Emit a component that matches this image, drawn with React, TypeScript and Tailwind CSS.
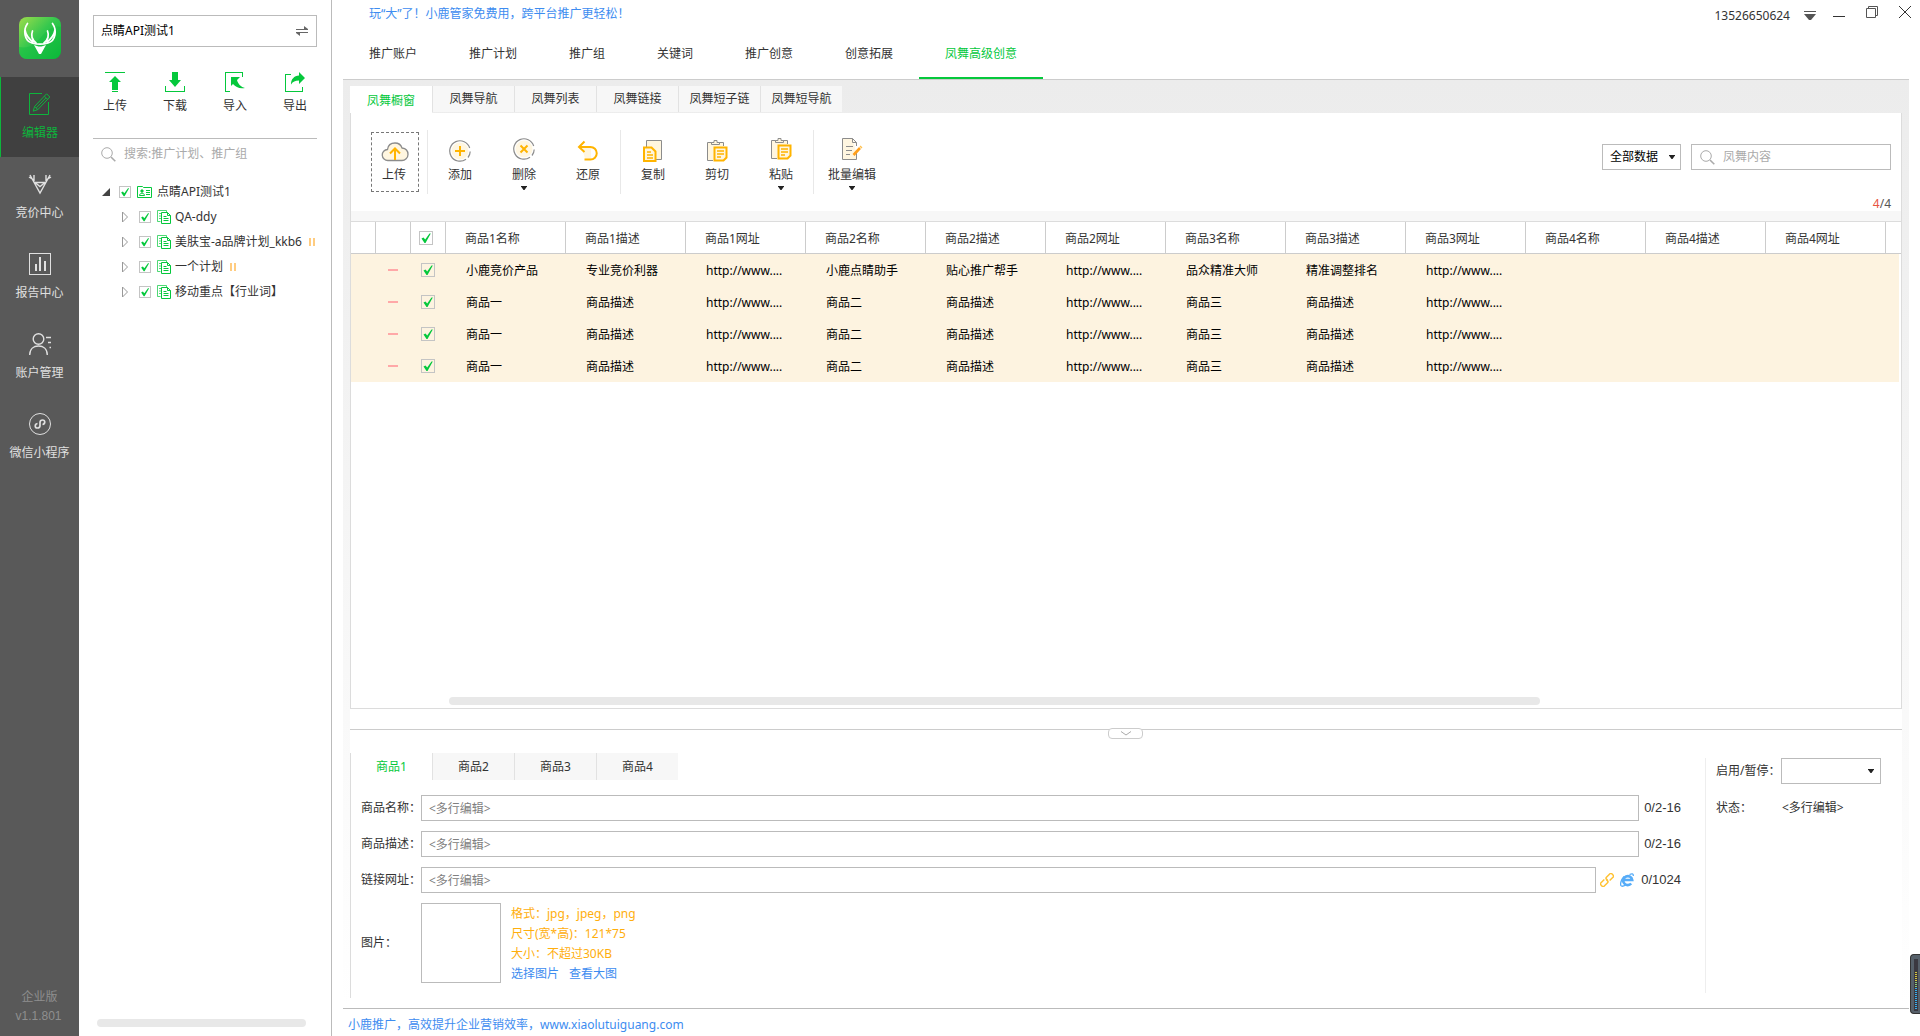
import { ReactNode } from "react";

const navTabs = ["推广账户", "推广计划", "推广组", "关键词", "推广创意", "创意拓展", "凤舞高级创意"];
const subTabs = ["凤舞橱窗", "凤舞导航", "凤舞列表", "凤舞链接", "凤舞短子链", "凤舞短导航"];
const goodsTabs = ["商品1", "商品2", "商品3", "商品4"];

const columns = [1, 2, 3, 4].flatMap((n) => [`商品${n}名称`, `商品${n}描述`, `商品${n}网址`]);

const url = "http://www....";
const plainRow = ["商品一", "商品描述", url, "商品二", "商品描述", url, "商品三", "商品描述", url, "", "", ""];
const rows = [
  ["小鹿竞价产品", "专业竞价利器", url, "小鹿点睛助手", "贴心推广帮手", url, "品众精准大师", "精准调整排名", url, "", "", ""],
  plainRow,
  plainRow,
  plainRow,
];

const plans = [
  { name: "QA-ddy", paused: false },
  { name: "美肤宝-a品牌计划_kkb6", paused: true },
  { name: "一个计划", paused: true },
  { name: "移动重点【行业词】", paused: false },
];

const railItems = [
  {
    label: "编辑器",
    icon: (
      <svg className="w-6 h-6" viewBox="0 0 24 24" fill="none" stroke="currentColor" strokeWidth={1}>
        <path d="M14 1.5H1.5v21h19V10" />
        <path d="M18.6 1.8l3.2 3.2-12 12.6-4.6 1.6 1.4-4.8zM16.4 4.2l3.2 3.2M6.6 14.4l3.2 3.2M8.4 15.8l9.4-9.8" />
      </svg>
    ),
  },
  {
    label: "竞价中心",
    icon: (
      <svg className="w-6 h-6" viewBox="0 0 24 24" fill="none" stroke="currentColor" strokeWidth={1.4}>
        <path d="M2 3l10 18L22 3M6 10.5h12M1 5l5 3V3M23 5l-5 3V3M7 10.5l5 4 5-4" />
      </svg>
    ),
  },
  {
    label: "报告中心",
    icon: (
      <svg className="w-6 h-6" viewBox="0 0 24 24" fill="none" stroke="currentColor">
        <rect x="1.5" y="1.5" width="21" height="21" />
        <path strokeWidth={2} d="M8 19v-7M12 19V5M17 19V9" />
      </svg>
    ),
  },
  {
    label: "账户管理",
    icon: (
      <svg className="w-6 h-6" viewBox="0 0 24 24" fill="none" stroke="currentColor" strokeWidth={1.4}>
        <circle cx="10.5" cy="7" r="5.3" />
        <path d="M1.7 23c0-6 4-9 8.800-9s8.800 3 8.800 9M18 5.500h5M20 10.500h3M21.500 15.500H23" />
      </svg>
    ),
  },
  {
    label: "微信小程序",
    icon: (
      <svg className="w-6 h-6" viewBox="0 0 24 24" fill="none" stroke="currentColor">
        <circle cx="12" cy="12" r="10.5" />
        <path strokeWidth={1.7} d="M9.5 11.5c-3 .5-3 4.500 0 4.500 1.500 0 2.500-1 2.500-2.500v-3C12 9 13 8 14.500 8c3 0 3 4 0 4.500" />
      </svg>
    ),
  },
];

const sideActions = [
  {
    label: "上传",
    icon: <path d="M0 0h20v1H0zM10 4l6 6h-3v8H7v-8H4zM7 19h6v1H7z" />,
  },
  {
    label: "下载",
    icon: <path d="M7 0h6v8h3l-6 7-6-7h3zM0 14h1v5h18v-5h1v6H0z" />,
  },
  {
    label: "导入",
    icon: <path d="M0 0h18v5h-1V1H1v18h4v1H0zM6 5h9l-3 3c1 4 4 7 8 8-6 1-9-1-12-4l-2 2z" />,
  },
  {
    label: "导出",
    icon: <path d="M0 2h6v1H1v16h16v-4h1v5H0zM14 0l6 6-6 6V8.5c-4 0-6 1-8 4C6 7 9 4 14 3.5z" />,
  },
];

const orange = "#ffb400";
const cream = "#fff6e0";
const line = "#8c8c8c";

const clipboard = (
  <g stroke={line} fill={cream}>
    <path d="M7 20.500H1.500v-18h16V6" />
    <path d="M5.500 4.500v-2h2.500V.5h3v2h2.500v2z" />
    <path d="M8.500 7.500h12v10l-3 3h-9z" stroke={orange} strokeWidth={2} />
    <path d="M11 11h7M11 14h7M11 17h4" stroke={orange} strokeWidth={1.3} />
  </g>
);

const tools = [
  {
    label: "添加",
    icon: (
      <g fill="none">
        <circle cx="11" cy="11" r="8.5" fill={cream} />
        <path d="M20.700 8A10.200 10.200 0 1 0 17 19.200M19 17.500a10 10 0 0 0 2.200-6" stroke={line} strokeWidth={1.2} />
        <path d="M11 6v10M6 11h10" stroke={orange} strokeWidth={2} />
      </g>
    ),
  },
  {
    label: "删除",
    arrow: true,
    icon: (
      <g fill="none">
        <circle cx="11" cy="11" r="8.5" fill={cream} />
        <path d="M20.700 8A10.200 10.200 0 1 0 17 19.200M19 17.500a10 10 0 0 0 2.200-6" stroke={line} strokeWidth={1.2} />
        <path d="M7.500 7.500l7 7M14.500 7.500l-7 7" stroke={orange} strokeWidth={2} />
      </g>
    ),
  },
  {
    label: "还原",
    icon: (
      <g fill="none">
        <path d="M5 7h9v12H8z" fill={cream} />
        <path d="M7.500 1.500L2 7l5.500 5M2 7h11.500a6 6 0 0 1 0 12.500H7.500" stroke={orange} strokeWidth={2} />
      </g>
    ),
  },
  {
    label: "复制",
    icon: (
      <g>
        <path d="M4.500 14V.5h15v19H14" fill={cream} stroke={line} />
        <path d="M2 7.500h7.500l4 4v9.500H2z" fill={cream} stroke={orange} strokeWidth={2} />
        <path d="M5 12h4M5 15h6M5 18h6" stroke={orange} strokeWidth={1.3} />
      </g>
    ),
  },
  { label: "剪切", icon: clipboard },
  { label: "粘贴", arrow: true, icon: clipboard },
];

const Caret = ({ className = "" }: { className?: string }) => (
  <svg className={`shrink-0 pointer-events-none ${className}`} width="6" height="4" viewBox="0 0 6 4" fill="#222">
    <path d="M0 0h6v.6L3.500 4h-1L0 .6z" />
  </svg>
);

const SearchIcon = () => (
  <svg className="shrink-0" width="15" height="15" viewBox="0 0 15 15" fill="none" stroke="#aaa">
    <circle cx="6" cy="6" r="5.3" />
    <path strokeWidth={1.6} d="M10 10l4.300 4.300" />
  </svg>
);

function Check({ label, small }: { label: string; small?: boolean }) {
  return (
    <span className={`relative block shrink-0 ${small ? "w-3 h-3" : "w-3.5 h-3.5"}`}>
      <input
        type="checkbox"
        defaultChecked
        aria-label={label}
        className="peer block w-full h-full appearance-none border border-[#c4c4c4]"
      />
      <svg className="absolute inset-0 w-full h-full pointer-events-none hidden peer-checked:block" viewBox="0 0 14 14">
        <path d="M2.500 7.500l2-1 1.700 2L10.500 2.500h1.300L6.500 12H5.500z" fill="#05c83c" />
      </svg>
    </span>
  );
}

function ToolButton({ label, arrow, children }: { label: string; arrow?: boolean; children: ReactNode }) {
  return (
    <button className={`min-w-16 h-full flex flex-col items-center ${arrow ? "pt-2" : "pt-[10px]"}`}>
      <svg width="22" height="22" viewBox="0 0 22 22">{children}</svg>
      <span className={`h-5 leading-5 ${arrow ? "mt-[5px]" : "mt-[3px]"}`}>{label}</span>
      {arrow && <Caret className="mt-px" />}
    </button>
  );
}

function TextRow({ id, label, count, children }: { id: string; label: string; count: string; children?: ReactNode }) {
  return (
    <div className="flex items-center h-[26px]">
      <label htmlFor={id} className="w-[60px] shrink-0 whitespace-nowrap">{label}</label>
      <input
        id={id}
        placeholder="<多行编辑>"
        className="flex-1 min-w-0 h-full border border-[#bbb] px-[7px] placeholder:text-[#808080] outline-none"
      />
      {children}
      <span className="ml-[5px] mr-6 text-[13px] font-['Liberation_Sans',sans-serif]">{count}</span>
    </div>
  );
}

export default function App() {
  return (
    <div className="flex h-screen overflow-hidden bg-white text-xs text-[#333] font-['Noto_Sans','Noto_Sans_CJK_SC',sans-serif]">
      <nav className="w-[79px] shrink-0 flex flex-col bg-[#595959] text-[#e0e0e0]">
        <div className="h-[77px] pt-[17px] flex justify-center">
          <svg width="42" height="42" viewBox="0 0 42 42" fill="none">
            <defs>
              <linearGradient id="logo" x1="0" y1="0" x2="1" y2="1">
                <stop offset="0" stopColor="#9fdc4c" />
                <stop offset="0.45" stopColor="#35c84e" />
                <stop offset="1" stopColor="#06b535" />
              </linearGradient>
            </defs>
            <rect width="42" height="42" rx="8" fill="url(#logo)" />
            <path d="M0 30c12 2 17-4 23-11S36 8 42 10v24a8 8 0 0 1-8 8H8a8 8 0 0 1-8-8z" fill="#12bd40" opacity="0.45" />
            <path d="M8.500 6.500C4 13 5 24 13 26c5 1.500 11 1.500 16 0 8-2 9-13 4.500-19.500M6 13c1 6 4 9 8 12M36 13c-1 6-4 9-8 12M13.500 14c-2 5 0 9 3.500 12M28.500 14c2 5 0 9-3.500 12" stroke="#fff" strokeWidth="1.7" strokeLinecap="round" />
            <path d="M15 28l4.500 1.500h3L27 28l-5 9h-2z" fill="#fff" />
          </svg>
        </div>
        {railItems.map((item, i) => (
          <a
            key={item.label}
            href="#"
            className={`h-20 pt-[15px] flex flex-col items-center gap-[7px] ${
              i === 0 ? "bg-[#404040] text-[#0db53c] border-l border-[#0db53c]" : ""
            }`}
          >
            {item.icon}
            <span className="leading-5">{item.label}</span>
          </a>
        ))}
        <div className="mt-auto pb-2.5 text-center leading-[19px] text-[#8f8f8f] font-['Liberation_Sans','Noto_Sans_CJK_SC',sans-serif]">
          <p>企业版</p>
          <p className="pr-0.5">v1.1.801</p>
        </div>
      </nav>

      <aside className="w-[253px] shrink-0 flex flex-col border-r border-[#bbb] px-3.5 pt-[15px]">
        <button className="h-8 shrink-0 flex items-center justify-between border border-[#bbb] px-[7px] text-black">
          点睛API测试1
          <svg width="14" height="10" viewBox="0 0 14 10" fill="#666">
            <path d="M1 3h8V0l4 3v1H1zM13 7H5v3L1 7V6h12z" />
          </svg>
        </button>
        <div className="h-[92px] shrink-0 flex pt-[25px] border-b border-[#bbb]">
          {sideActions.map((a) => (
            <button key={a.label} className="w-[60px] shrink-0 -ml-2 mr-2 flex flex-col items-center gap-1">
              <svg width="20" height="20" viewBox="0 0 20 20" fill="#05c83c">{a.icon}</svg>
              <span className="leading-5">{a.label}</span>
            </button>
          ))}
        </div>
        <label className="h-[30px] shrink-0 flex items-center gap-2 pl-2">
          <SearchIcon />
          <input
            aria-label="搜索"
            placeholder="搜索:推广计划、推广组"
            className="flex-1 min-w-0 placeholder:text-[#aaa] outline-none"
          />
        </label>

        <ul className="flex-1 pt-2.5 overflow-hidden whitespace-nowrap">
          <li className="h-[25px] flex items-center pl-[9px]">
            <svg width="8" height="8" viewBox="0 0 8 8" fill="#444"><path d="M8 0v8H0z" /></svg>
            <span className="w-[9px]" />
            <Check label="点睛API测试1" small />
            <svg className="ml-1.5 mr-[5px]" width="15" height="12" viewBox="0 0 15 12" fill="none" stroke="#05c83c">
              <path d="M.5 11.500V.5h5l1 1h8v10z" />
              <circle cx="5" cy="5" r="1.2" fill="#05c83c" />
              <path d="M2.500 9.500c0-3 5-3 5 0zM9 4.500h4M9 6.500h4M9 8.500h4" />
            </svg>
            点睛API测试1
          </li>
          {plans.map((plan) => (
            <li key={plan.name} className="h-[25px] flex items-center pl-[29px]">
              <svg className="shrink-0 mr-[11px]" width="6" height="12" viewBox="0 0 6 12" fill="none" stroke="#999">
                <path d="M.5 1v10L5.500 6z" />
              </svg>
              <Check label={plan.name} small />
              <svg className="shrink-0 ml-1.5 mr-1" width="14" height="14" viewBox="0 0 14 14" fill="none" stroke="#05c83c">
                <path d="M3.500 11.500H.5V.5h9v2M2 3.500h2M2 6h2M2 8.500h2" opacity="0.7" />
                <path d="M4.500 2.500h6l3 3v8h-9zM10.500 2.500v3h3M6.500 6.500h3M6.500 8.500h5M6.500 10.500h5" />
              </svg>
              {plan.name}
              {plan.paused && (
                <svg className="shrink-0 ml-[7px]" width="6" height="8" viewBox="0 0 6 8" fill="#ffcc80">
                  <path d="M0 0h2v8H0zM4 0h2v8H4z" />
                </svg>
              )}
            </li>
          ))}
        </ul>
        <div className="h-2 shrink-0 ml-1 mr-[11px] mb-[9px] rounded-full bg-[#e8e8e8]" />
      </aside>

      <div className="flex-1 min-w-0 flex flex-col px-[11px]">
        <header className="h-8 shrink-0 flex justify-between pl-[26px]">
          <a href="#" className="leading-7 text-[#3d8cf0]">玩“大”了！小鹿管家免费用，跨平台推广更轻松！</a>
          <div className="-mr-0.5 flex">
            <span className="leading-8">13526650624</span>
            <button aria-label="菜单" className="ml-3.5">
              <svg width="12" height="10" viewBox="0 0 12 10" fill="#555"><path d="M0 0h12v1H0zM0 3h12L7 9H5z" /></svg>
            </button>
            <button aria-label="最小化" className="ml-[17px]">
              <svg width="12" height="1" viewBox="0 0 12 1" fill="#333"><path d="M0 0h12v1H0z" /></svg>
            </button>
            <button aria-label="还原窗口" className="ml-[21px] pb-2">
              <svg width="12" height="12" viewBox="0 0 12 12" fill="none" stroke="#555">
                <path d="M.5 2.500h9v9h-9zM2.500 2.500v-2h9v9h-2" />
              </svg>
            </button>
            <button aria-label="关闭" className="ml-[21px] pb-2">
              <svg width="12" height="12" viewBox="0 0 12 12" stroke="#333"><path d="M0 0l12 12M12 0L0 12" /></svg>
            </button>
          </div>
        </header>

        <div className="h-12 shrink-0 flex border-b border-[#ccc]">
          {navTabs.map((tab) => (
            <button
              key={tab}
              className={`px-[26px] h-full pb-0.5 border-b-2 ${
                tab === "凤舞高级创意" ? "border-[#05c83c] text-[#05c83c]" : "border-transparent"
              }`}
            >
              {tab}
            </button>
          ))}
        </div>

        <main className="flex-1 min-h-0 flex flex-col px-[7px] pt-1.5 bg-linear-to-b from-[#ececec] to-white">
          <div className="h-[27px] shrink-0 flex">
            {subTabs.map((tab, i) => (
              <button
                key={tab}
                className={`w-[82px] ${
                  i === 0 ? "bg-white text-[#05c83c] pt-0.5" : "bg-[#f7f7f7] border-l border-[#e2e2e2] mb-px"
                }`}
              >
                {tab}
              </button>
            ))}
          </div>

          <section className="flex-1 min-h-0 flex flex-col bg-white border border-t-0 border-[#dcdcdc]">
            <div className="h-[81px] shrink-0 pt-[17px] pl-5 pr-2.5 flex">
              <button className="w-12 h-[60px] mt-0.5 mr-2 flex flex-col items-center border border-dashed border-[#777] pt-[9px]">
                <svg width="28" height="20" viewBox="0 0 28 20" fill="none">
                  <path d="M7 18.500a5.500 5.500 0 0 1-.5-11C7 3.500 10 1 14 1s6 2 7 5c4 .5 6 3 6 6.500s-3 6-6 6z" fill={cream} stroke={line} strokeWidth={1.3} />
                  <path d="M14 18V7M9 11.500l5-5 5 5" stroke={orange} strokeWidth={2} />
                </svg>
                <span className="mt-[3px] pr-0.5 leading-5">上传</span>
              </button>
              <div className="flex h-full">
                <div className="flex border-l border-[#e8e8e8]">
                  {tools.slice(0, 3).map((t) => (
                    <ToolButton key={t.label} label={t.label} arrow={t.arrow}>{t.icon}</ToolButton>
                  ))}
                </div>
                <div className="flex border-x border-[#e8e8e8]">
                  {tools.slice(3).map((t) => (
                    <ToolButton key={t.label} label={t.label} arrow={t.arrow}>{t.icon}</ToolButton>
                  ))}
                </div>
                <div className="px-1.5">
                  <ToolButton label="批量编辑" arrow>
                    <path d="M11.500.5h-10v21h14V15M15.500 8V4.500l-4-4" fill={cream} stroke={line} />
                    <path d="M11.500.5v4h4M5 8.500h7M5 12.500h6M5 16.500h4" fill="none" stroke={line} />
                    <path d="M12.500 17l6.500-7" stroke="#ff9f1a" strokeWidth={2.6} />
                    <path d="M19.500 9.500l1-1" stroke="#ffc04d" strokeWidth={2.6} />
                  </ToolButton>
                </div>
              </div>
              <div className="ml-auto mt-3.5 h-[26px] flex gap-2.5">
                <div className="relative">
                  <select aria-label="数据范围" className="w-[79px] h-full appearance-none border border-[#bbb] pl-[7px] text-black outline-none">
                    <option>全部数据</option>
                  </select>
                  <Caret className="absolute right-1.5 top-[11px]" />
                </div>
                <label className="w-[200px] h-full flex items-center gap-2 border border-[#bbb] px-2">
                  <SearchIcon />
                  <input aria-label="凤舞内容" placeholder="凤舞内容" className="flex-1 min-w-0 placeholder:text-[#aaa] outline-none" />
                </label>
              </div>
            </div>
            <p className="h-[17px] shrink-0 pr-2.5 text-right leading-5 text-[#555]">
              <span className="text-[#e8543f]">4</span>/4
            </p>
            <div className="h-2.5 shrink-0 bg-[#f7f7f7]" />

            <div className="flex-1 min-h-0 overflow-hidden border-t border-[#dcdcdc]">
              <table className="w-full table-fixed border-separate border-spacing-0">
                <colgroup>
                  <col className="w-[25px]" />
                  <col className="w-[35px]" />
                  <col className="w-[35px]" />
                  {columns.map((c) => <col key={c} className="w-[120px]" />)}
                  <col />
                </colgroup>
                <thead>
                  <tr className="h-8 text-left">
                    <th className="p-0 border-b border-r border-[#ccc]" />
                    <th className="p-0 border-b border-r border-[#ccc]" />
                    <th className="p-0 border-b border-r border-[#ccc] pl-2"><Check label="全选" /></th>
                    {columns.map((c) => (
                      <th key={c} className="p-0 pl-[19px] pt-0.5 border-b border-r border-[#ccc] font-normal">{c}</th>
                    ))}
                    <th className="p-0 border-b border-[#ccc]" />
                  </tr>
                </thead>
                <tbody className="text-black bg-[#fdf3e0]">
                  {rows.map((row, i) => (
                    <tr key={i} className="h-8">
                      <td className="p-0" />
                      <td className="p-0 pl-3"><div className="w-2.5 h-0.5 bg-[#ffa8a8]" /></td>
                      <td className="p-0 pl-2.5"><Check label={`选择第${i + 1}行`} /></td>
                      {row.map((cell, j) => <td key={j} className="p-0 pl-5 pt-0.5">{cell}</td>)}
                      <td className="p-0 border-r-2 border-white" />
                    </tr>
                  ))}
                </tbody>
              </table>
            </div>
            <div className="h-2 shrink-0 mb-[3px] ml-[98px] mr-[361px] rounded-full bg-[#e8e8e8]" />
          </section>

          <section className="shrink-0 bg-white">
            <div className="relative h-[21px] border-b border-[#ccc]">
              <button
                aria-label="收起"
                className="absolute left-1/2 -bottom-2.5 -ml-[18px] w-[35px] h-[11px] flex items-center justify-center bg-white border border-[#ccc] rounded-sm"
              >
                <svg width="10" height="5" viewBox="0 0 10 5" fill="none" stroke="#aaa"><path d="M0 .5l5 3.500 5-3.500" /></svg>
              </button>
            </div>
            <div className="flex pt-[23px] pb-2.5">
              <div className="flex-1 min-w-0 border-l border-[#dcdcdc]">
                <div className="h-[27px] flex">
                  {goodsTabs.map((tab, i) => (
                    <button
                      key={tab}
                      className={i === 0 ? "w-[81px] text-[#05c83c]" : "w-[82px] bg-[#f7f7f7] border-l border-[#e2e2e2]"}
                    >
                      {tab}
                    </button>
                  ))}
                </div>
                <div className="pt-[15px] pl-2.5 pb-3.5 flex flex-col gap-2.5">
                  <TextRow id="name" label="商品名称：" count="0/2-16" />
                  <TextRow id="desc" label="商品描述：" count="0/2-16" />
                  <TextRow id="link" label="链接网址：" count="0/1024">
                    <svg className="ml-1" width="14" height="14" viewBox="0 0 14 14" fill="none" stroke="#ffc233" strokeWidth={1.5}>
                      <g transform="rotate(-45 7 7)">
                        <path d="M5.500 4.700H.5q-1.300 0-1.300 1.300v2q0 1.300 1.300 1.300h5q1.300 0 1.300-1.300V6.500" />
                        <path d="M8.500 9.300h5q1.300 0 1.300-1.300V6q0-1.300-1.300-1.300h-5Q7.200 4.700 7.200 6v1.500" />
                      </g>
                    </svg>
                    <svg className="ml-1.5 mr-0.5" width="14" height="14" viewBox="0 0 14 14" fill="none" stroke="#56acf8">
                      <path strokeWidth={2.6} d="M3.800 7h8.400a4.500 4.500 0 1 0-1 3.500" />
                      <path strokeWidth={1.3} d="M9.500 1.500C12 .3 13.500.5 13.300 3M4 3.500C1 7 0 11 1 12.700c.8 1 3 .3 5-1" />
                    </svg>
                  </TextRow>
                  <div className="flex items-start">
                    <span className="w-[60px] leading-[80px]">图片：</span>
                    <div className="w-20 h-20 border border-[#bbb]" />
                    <div className="ml-2.5 pt-px leading-5 text-[#ffae0d]">
                      <p>格式：jpg，jpeg，png</p>
                      <p>尺寸(宽*高)：121*75</p>
                      <p>大小：不超过30KB</p>
                      <p className="flex gap-2.5 text-[#3d8cf0]">
                        <a href="#">选择图片</a>
                        <a href="#">查看大图</a>
                      </p>
                    </div>
                  </div>
                </div>
              </div>
              <div className="w-[197px] my-[5px] border-l border-[#eee] pl-2.5">
                <div className="flex items-center">
                  <label htmlFor="enabled" className="w-[65px] whitespace-nowrap">启用/暂停：</label>
                  <div className="relative">
                    <select id="enabled" className="block w-[100px] h-[26px] appearance-none border border-[#bbb] outline-none">
                      <option></option>
                    </select>
                    <Caret className="absolute right-[7px] top-[11px]" />
                  </div>
                </div>
                <div className="flex items-center mt-3 h-6">
                  <span className="w-[66px]">状态：</span>
                  <span>&lt;多行编辑&gt;</span>
                </div>
              </div>
            </div>
          </section>
        </main>

        <footer className="h-7 shrink-0 border-t border-[#bbb] pl-[5px] leading-8 text-[#3d8cf0]">
          小鹿推广，高效提升企业营销效率，<a href="#">www.xiaolutuiguang.com</a>
        </footer>
      </div>

      <div className="fixed right-0 bottom-[22px] w-2.5 h-[60px] flex justify-center rounded-l-sm border border-r-0 border-[#333] bg-[#56606a] py-1">
        <svg width="4" height="52" viewBox="0 0 4 52">
          <path d="M0 0h4v52H0z" fill="#3a3840" />
          <path d="M2 13v10" stroke="#d6c83c" strokeWidth={2} strokeDasharray="1 1" />
          <path d="M2 23v6" stroke="#8ccf7a" strokeWidth={2} strokeDasharray="1 1" />
          <path d="M2 29v22" stroke="#35b0f0" strokeWidth={2} strokeDasharray="1 1" />
        </svg>
      </div>
    </div>
  );
}
